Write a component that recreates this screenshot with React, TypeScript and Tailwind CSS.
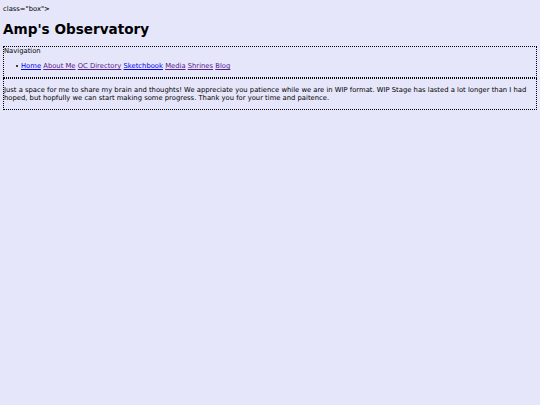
import React from "react";

export default function App() {
  const links: [string, boolean][] = [
    ["Home", false],
    ["About Me", true],
    ["OC Directory", true],
    ["Sketchbook", false],
    ["Media", true],
    ["Shrines", true],
    ["Blog", true],
  ];
  return (
    <div className="min-h-[405px] bg-[#e6e6fa] text-black px-[3px] pt-[5px] text-[6.8px] leading-[8px] font-['DejaVu_Sans',sans-serif]">
      <div className="h-[8px]">class="box"&gt;</div>
      <h1 className="text-[13.6px] leading-[16px] font-bold mt-[8px] mb-[9px]">Amp's Observatory</h1>
      <div className="border border-dotted border-black pb-[3px]">
        <div>Navigation</div>
        <ul className="list-none pl-[12px] mt-[7px] mb-[4px]">
          <li className="flex items-center">
            <span className="inline-block w-[2px] h-[2px] rounded-full bg-black mr-[3px] shrink-0"></span>
            <span>
              {links.map(([t, v], i) => (
                <React.Fragment key={t}>
                  <a href="#" className={"underline " + (v ? "text-[#551a8b]" : "text-[#0000ee]")}>{t}</a>
                  {i < links.length - 1 ? " " : ""}
                </React.Fragment>
              ))}
            </span>
          </li>
        </ul>
      </div>
      <div className="border border-dotted border-black">
        <p className="my-[7px]">
          Just a space for me to share my brain and thoughts! We appreciate you patience while we are in WIP format. WIP Stage has lasted a lot longer than I had hoped, but hopfully we can start making some progress. Thank you for your time and paitence.
        </p>
      </div>
    </div>
  );
}
